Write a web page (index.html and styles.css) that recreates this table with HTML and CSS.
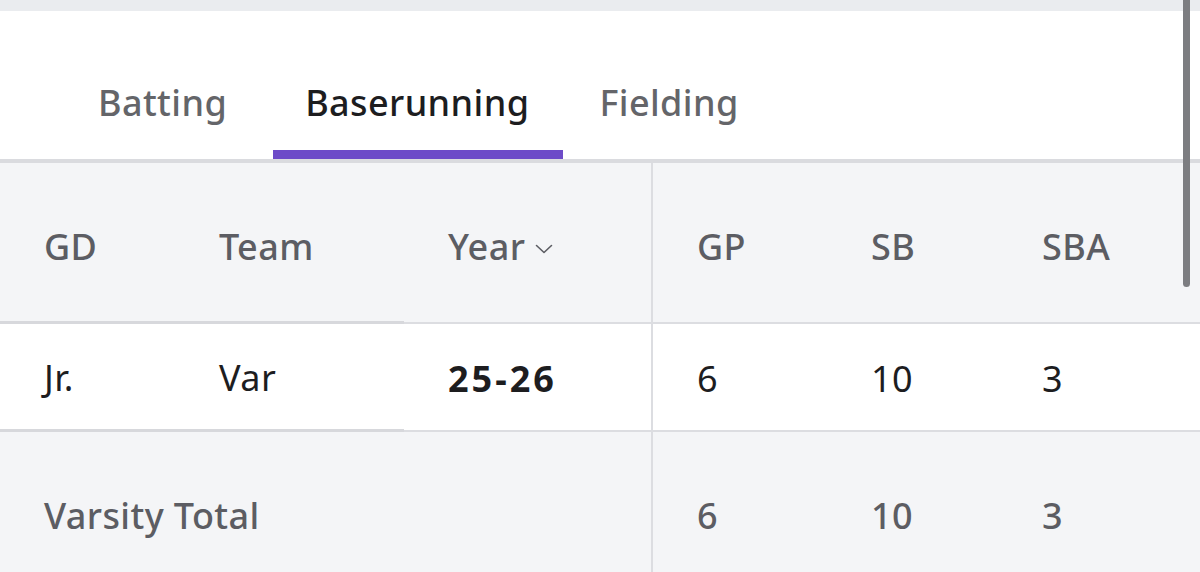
FILE: index.html
```html
<!DOCTYPE html>
<html lang="en">
<head>
<meta charset="utf-8">
<title>Baserunning stats</title>
<link rel="stylesheet" href="styles.css">
</head>
<body>
<div class="page">
  <div class="topbar"></div>
  <nav class="tabs">
    <a class="tab">Batting</a>
    <a class="tab active">Baserunning</a>
    <a class="tab">Fielding</a>
  </nav>
  <div class="stats">
    <div class="cell head c-gd">GD</div>
    <div class="cell head c-team">Team</div>
    <div class="cell head c-year">Year
      <svg class="chev" width="18" height="10" viewBox="0 0 18 10"><path d="M1.5 1.5l7.5 7 7.5-7" fill="none" stroke="#5c5d63" stroke-width="1.6" stroke-linecap="round" stroke-linejoin="round"/></svg>
    </div>
    <div class="cell head c-num">GP</div>
    <div class="cell head c-num">SB</div>
    <div class="cell head c-num c-last">SBA</div>

    <div class="cell row c-gd">Jr.</div>
    <div class="cell row c-team">Var</div>
    <div class="cell row c-year bold">25-26</div>
    <div class="cell row c-num">6</div>
    <div class="cell row c-num">10</div>
    <div class="cell row c-num c-last">3</div>

    <div class="cell total c-label">Varsity Total</div>
    <div class="cell total c-year"></div>
    <div class="cell total c-num">6</div>
    <div class="cell total c-num">10</div>
    <div class="cell total c-num c-last">3</div>
  </div>
  <div class="scrollbar"></div>
</div>
</body>
</html>
```

FILE: styles.css
```css
* { box-sizing: border-box; }
html, body { margin: 0; padding: 0; }
body {
  width: 1200px;
  height: 572px;
  overflow: hidden;
  background: #ffffff;
  font-family: "Noto Sans", "Open Sans", sans-serif;
}
.page { position: relative; width: 1200px; height: 572px; overflow: hidden; }
.topbar { height: 11px; background: #eaecef; }
.tabs {
  display: flex;
  padding-left: 64px;
  border-bottom: 4px solid #dadbdf;
}
.tab {
  padding: 68px 34px 23px;
  line-height: 48px;
  font-size: 36px;
  font-weight: 500;
  letter-spacing: 0.4px;
  color: #646569;
  border-bottom: 9px solid transparent;
}
.tab.active {
  margin: 0 2px 0 12px;
  padding-left: 32px;
  color: #1d1d1f;
  border-bottom-color: #6d4bc8;
}
.stats {
  display: grid;
  grid-template-columns: 175px 229px 249px 174px 171px 1fr;
  grid-template-rows: 161px 108px 166px;
  font-size: 36px;
}
.cell {
  display: flex;
  align-items: center;
  padding-left: 44px;
  border-bottom: 2px solid #dcdde1;
  white-space: nowrap;
}
.head { background: #f4f5f7; color: #5c5d63; padding-top: 8px; font-weight: 500; letter-spacing: 0.4px; }
.row { background: #ffffff; color: #1d1d1f; padding-top: 2px; letter-spacing: 0.4px; }
.total { background: #f4f5f7; color: #5c5d63; border-bottom: none; font-weight: 500; letter-spacing: 0.4px; }
.c-gd, .c-team { border-bottom-width: 3px; border-bottom-color: #d7d8dc; }
.c-year { border-right: 2px solid #dcdde1; }
.c-label { grid-column: 1 / span 2; }
.bold { font-weight: 700; letter-spacing: 3px; }
.chev { margin-left: 10px; margin-top: 4px; }
.scrollbar {
  position: absolute;
  top: 0;
  left: 1183px;
  width: 7px;
  height: 287px;
  border-radius: 0 0 4px 4px;
  background: #7c7d81;
}
```
